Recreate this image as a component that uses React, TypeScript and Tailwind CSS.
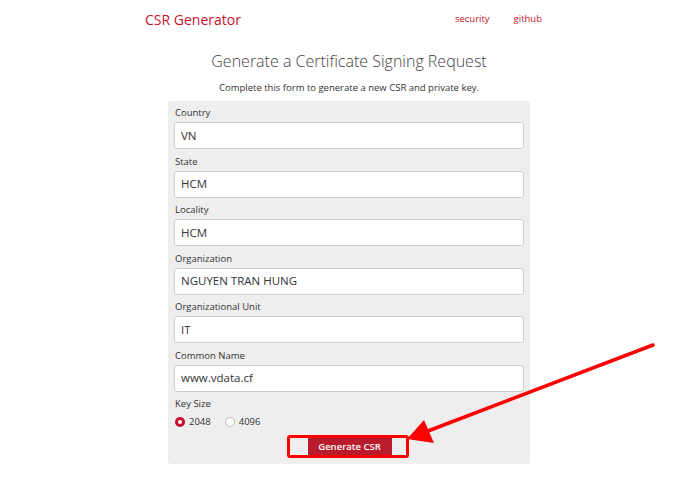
import React from 'react';

const fields = [
  { label: 'Country', value: 'VN' },
  { label: 'State', value: 'HCM' },
  { label: 'Locality', value: 'HCM' },
  { label: 'Organization', value: 'NGUYEN TRAN HUNG' },
  { label: 'Organizational Unit', value: 'IT' },
  { label: 'Common Name', value: 'www.vdata.cf' },
];

export default function App() {
  return (
    <div className="relative w-[690px] h-[478px] bg-white overflow-hidden font-['Open_Sans',sans-serif] text-[#333]">
      {/* Top bar */}
      <header className="flex items-center h-[38px] pl-[145px] pr-[148px]">
        <a className="text-[14px] text-[#c8102e]">CSR Generator</a>
        <nav className="ml-auto flex gap-[24px] text-[9.5px] text-[#c8102e]">
          <a>security</a>
          <a>github</a>
        </nav>
      </header>

      <main className="flex flex-col items-center pl-[8px]">
        <h1 className="mt-[10px] text-[16px] font-light text-[#444] leading-[26px]">
          Generate a Certificate Signing Request
        </h1>
        <p className="mt-[7px] text-[9.5px] text-[#333] leading-[14px]">
          Complete this form to generate a new CSR and private key.
        </p>

        {/* Form panel */}
        <form className="mt-[6px] w-[362px] bg-[#eeeeee] rounded-[3px] px-[6px] pt-[4px] pb-[8px]">
          {fields.map((f) => (
            <div key={f.label} className="mb-[4.5px]">
              <label className="block pl-[1px] text-[9.5px] leading-[15px] mb-[2px] text-[#333]">
                {f.label}
              </label>
              <div className="h-[27px] bg-white border border-[#cccccc] rounded-[3px] flex items-center px-[6px] text-[11.5px] text-[#333]">
                {f.value}
              </div>
            </div>
          ))}

          <div className="pl-[1px] text-[9.5px] leading-[15px] mt-[2px]">Key Size</div>
          <div className="flex items-center gap-[14px] mt-[4px] pl-[1px] text-[9.5px]">
            <span className="flex items-center gap-[4px]">
              <span className="w-[10px] h-[10px] rounded-full bg-[#c8102e] flex items-center justify-center">
                <span className="w-[4px] h-[4px] rounded-full bg-white" />
              </span>
              2048
            </span>
            <span className="flex items-center gap-[4px]">
              <span className="w-[10px] h-[10px] rounded-full bg-white border border-[#bbbbbb]" />
              4096
            </span>
          </div>

          <div className="flex justify-center mt-[9px] pl-[1px]">
            <div className="relative">
              <button
                type="button"
                className="h-[18px] w-[84px] bg-[#b81b2c] text-white text-[9.5px] font-semibold flex items-center justify-center"
              >
                Generate CSR
              </button>
              {/* annotation box */}
              <div className="absolute -left-[21px] -right-[17px] -top-[3px] -bottom-[2px] border-[3px] border-[#ff0000] rounded-[3px] pointer-events-none" />
            </div>
          </div>
        </form>
      </main>

      {/* annotation arrow */}
      <svg className="absolute left-0 top-0 pointer-events-none" width="690" height="478" viewBox="0 0 690 478">
        <line x1="653" y1="345" x2="428" y2="431" stroke="#ff0000" strokeWidth="3.5" strokeLinecap="round" />
        <polygon points="407,439 424,420 434,443" fill="#ff0000" />
      </svg>
    </div>
  );
}
